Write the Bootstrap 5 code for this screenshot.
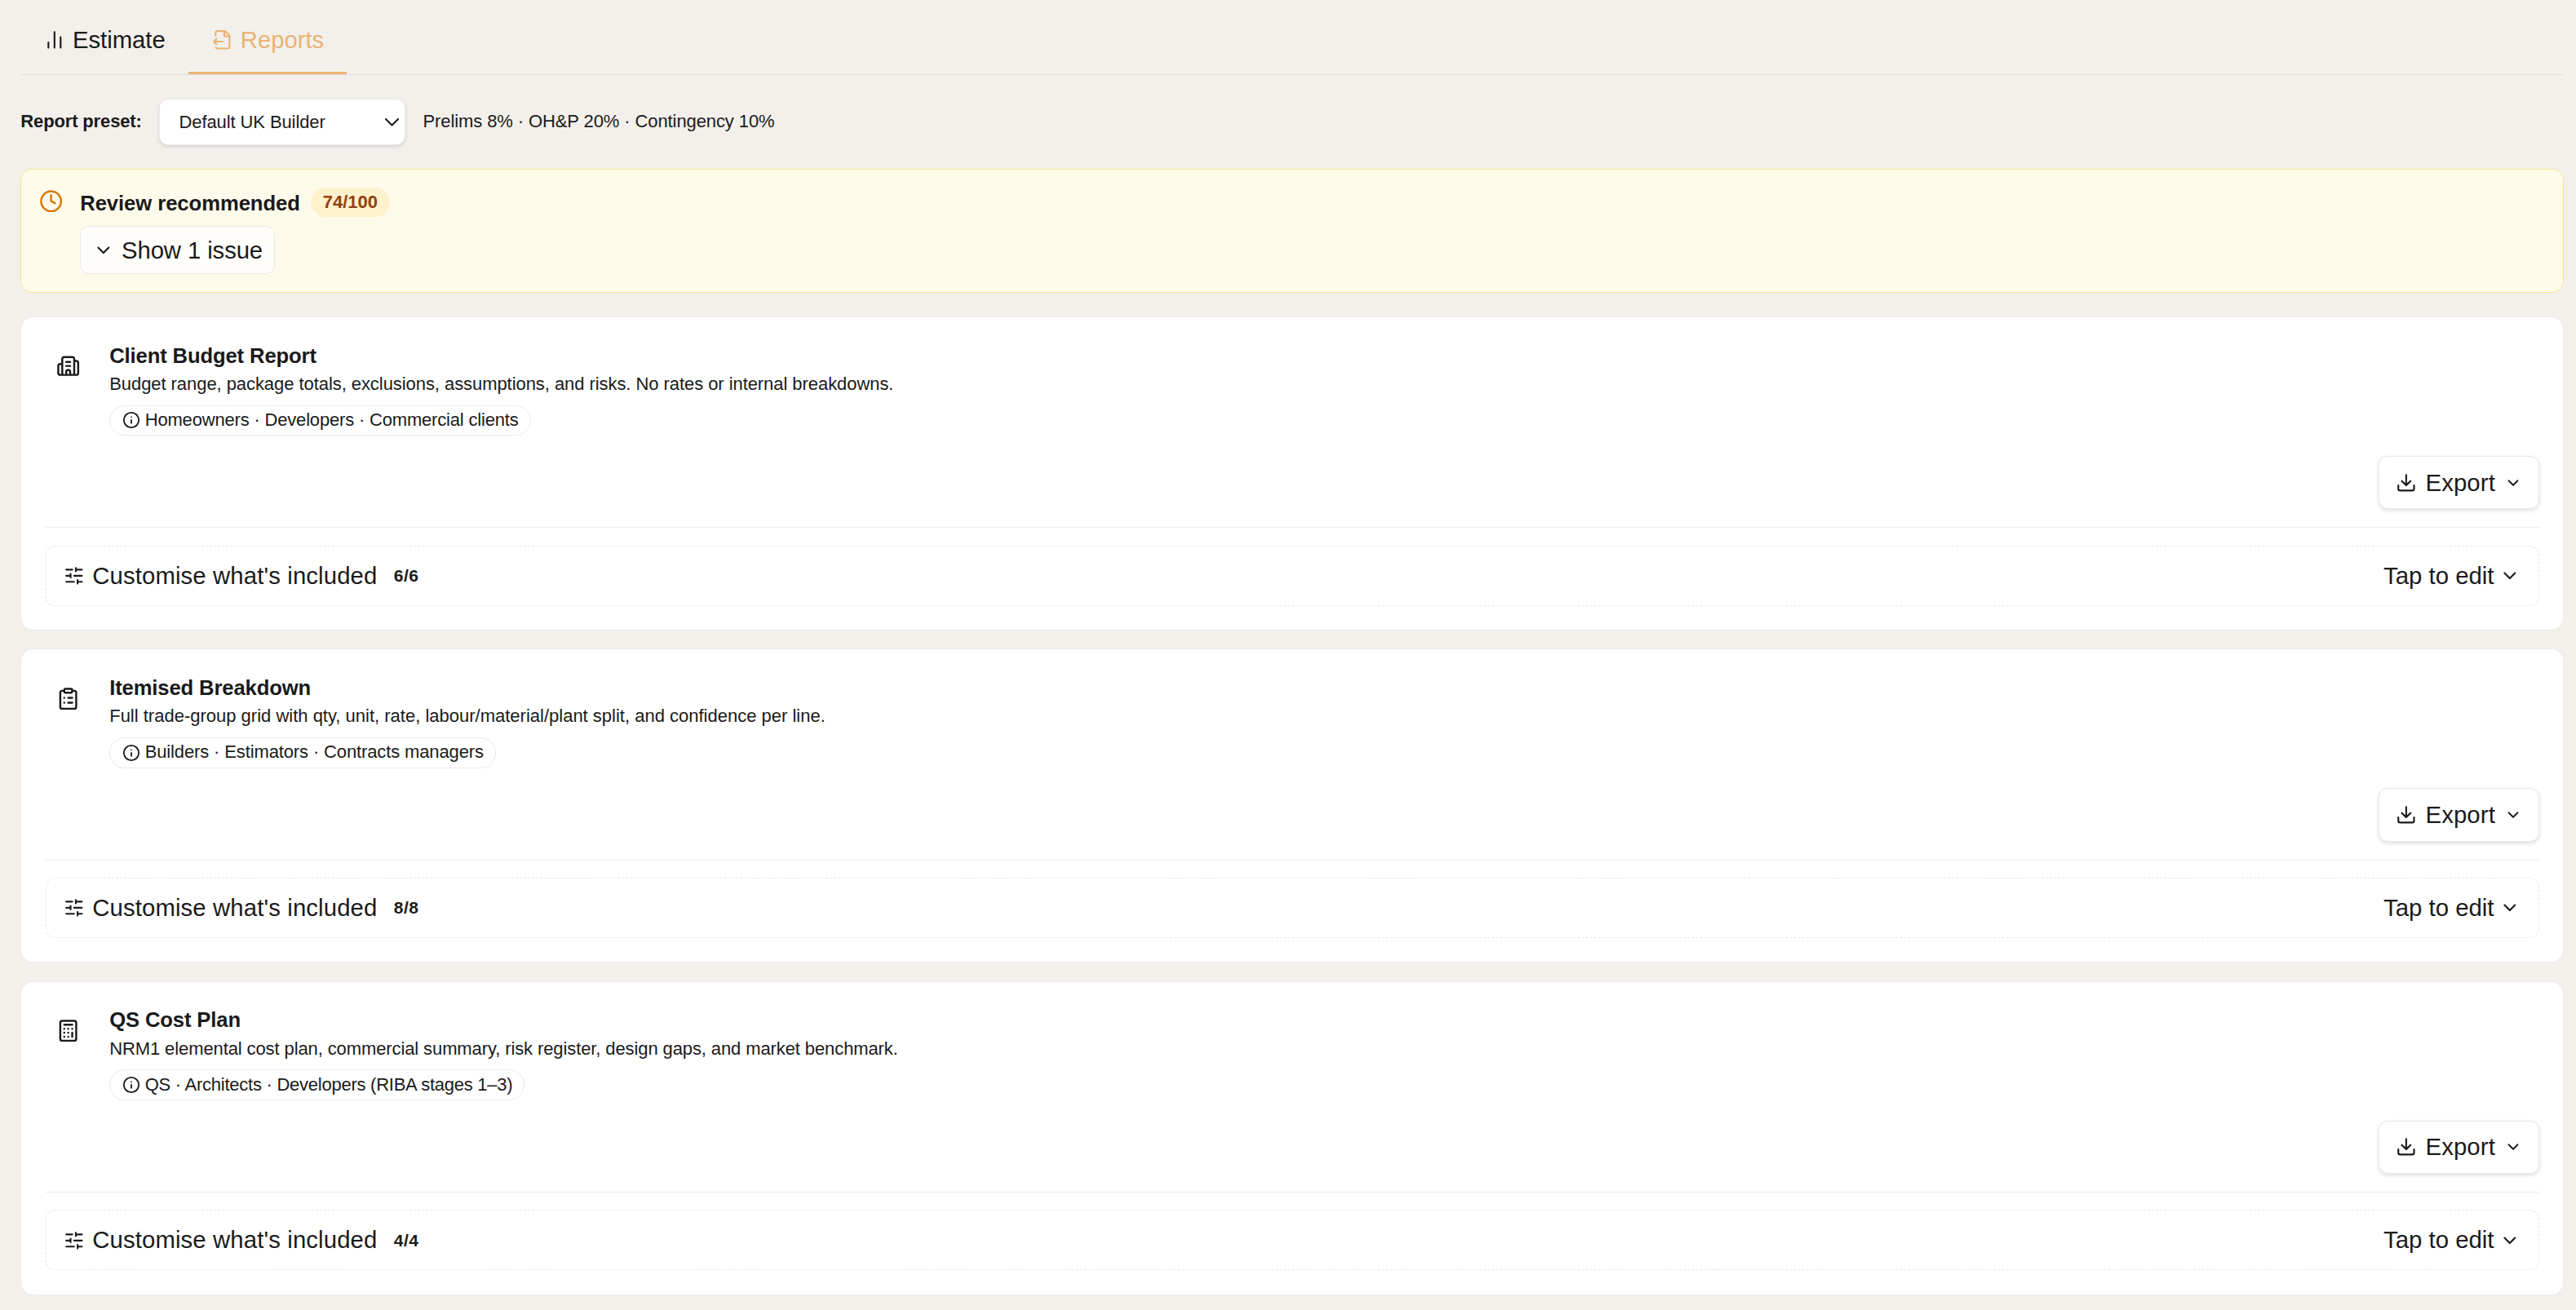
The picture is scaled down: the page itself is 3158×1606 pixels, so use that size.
<!DOCTYPE html>
<html lang="en">
<head>
<meta charset="utf-8">
<meta name="viewport" content="width=device-width, initial-scale=1">
<title>Reports</title>
<link href="https://cdn.jsdelivr.net/npm/bootstrap@5.3.0/dist/css/bootstrap.min.css" rel="stylesheet">
<script src="https://cdn.jsdelivr.net/npm/bootstrap@5.3.0/dist/js/bootstrap.bundle.min.js"></script>
<style>
  body { background:#f3f0eb; color:#1a1a1a; font-family:"Liberation Sans",Arial,sans-serif; font-size:22px; line-height:1.4; overflow:hidden; }
  .page { padding:10px 15.4px 0 25.3px; }
  svg { fill:none; stroke:currentColor; stroke-width:2; stroke-linecap:round; stroke-linejoin:round; flex:none; display:block; }
  .i12 { width:22px; height:22px; } .i14 { width:25.65px; height:25.65px; } .i16 { width:29.3px; height:29.3px; }
  .fs-body { font-size:29.3px; line-height:40px; letter-spacing:-.04px; white-space:nowrap; }
  .tabs { height:82px; border-bottom:1px solid #dfddd9; }
  .tab-link { height:81px; padding:0 28.4px 0 28.9px; gap:9.2px; color:inherit; border:0; border-bottom:3px solid transparent; background:none; }
  .tab-link.active { color:#e9b374; border-color:#e9b374; }
  .preset { height:56.4px; margin-top:29.3px; }
  .preset-label { letter-spacing:-.14px; }
  .preset-select { width:301.5px; height:56.4px; margin:0 22px 0 21.3px; padding:1.5px 6.5px 0 23.5px; background:#fff; border:1px solid #ebebeb; border-radius:11px; box-shadow:0 2px 4px rgba(0,0,0,.12); letter-spacing:-.1px; }
  .preset-note { letter-spacing:-.1px; }
  .review { margin-top:29.3px; height:152px; padding:22px; gap:20.6px; background:#fffbeb; border:1px solid #f9e58c; border-radius:14px; }
  .review .clock { color:#d97706; margin-top:2.4px; }
  .review-title { font-size:25.65px; line-height:36px; font-weight:700; margin:0 13.3px 0 0; padding-top:1.2px; letter-spacing:-.06px; }
  .score { background:#fdf2cc; color:#92400e; height:36px; line-height:35px; padding:0 14.7px; border-radius:18px; font-weight:700; letter-spacing:-.05px; }
  .show-btn { margin-top:10.2px; height:58.5px; padding:0 14px 0 14.6px; gap:9.6px; background:rgba(255,255,255,.8); border:1px solid #ebeae6; border-radius:11px; color:inherit; }
  .show-btn .fs-body { letter-spacing:-.1px; }
  .report { margin-top:29.1px; height:384.9px; padding:29.6px 29px 29.3px 29.3px; background:#fff; border:1px solid #ebebea; border-radius:15px; }
  .report + .report { margin-top:22.5px; }
  .tile { width:56.6px; height:60.6px; margin-right:22px; }
  .report-title { font-size:25.65px; line-height:34.4px; font-weight:700; margin:0; letter-spacing:-.14px; }
  .desc { line-height:35.4px; }
  .audience { margin-top:8.2px; height:37.5px; padding:0 14px 0 14.5px; gap:6px; border:1px solid #ebebeb; border-radius:19px; letter-spacing:-.18px; }
  .client .desc { letter-spacing:-.062px; }
  .itemised .audience { letter-spacing:-.13px; }
  .costplan .desc { letter-spacing:-.105px; }
  .costplan .audience { letter-spacing:-.25px; }
  .export { margin-top:24.6px; height:66.4px; padding:0 20px; gap:10.6px; background:#fff; border:1px solid #e9e9e9; border-radius:11px; box-shadow:0 2px 5px rgba(0,0,0,.13); color:inherit; }
  .export .fs-body { letter-spacing:.15px; }
  .options { margin-top:22px; padding-top:21.4px; border-top:1px solid #ebebeb; }
  .options-btn { height:74px; padding:0 21.5px 0 21px; border:1px dashed #e6e6e6; border-radius:11px; background:none; color:inherit; }
  .options-label { margin-left:10px; letter-spacing:.13px; }
  .options-hint { margin-right:7px; letter-spacing:.02px; }
  .count { font-size:21px; font-weight:700; letter-spacing:.4px; margin-left:20.4px; }
</style>
</head>
<body>
<svg width="0" height="0" class="position-absolute" aria-hidden="true">
  <symbol id="chart" viewBox="0 0 24 24"><path d="M5 21v-6M12 21V3M19 21V9"/></symbol>
  <symbol id="file" viewBox="0 0 24 24"><path d="M4.226 20.925A2 2 0 0 0 6 22h12a2 2 0 0 0 2-2V8a2.4 2.4 0 0 0-.706-1.706l-3.588-3.588A2.4 2.4 0 0 0 14 2H6a2 2 0 0 0-2 2v3.127M14 2v5a1 1 0 0 0 1 1h5M5 11l-3 3M5 17l-3-3h10"/></symbol>
  <symbol id="clock" viewBox="0 0 24 24"><circle cx="12" cy="12" r="10"/><path d="M12 6v6l4 2"/></symbol>
  <symbol id="down" viewBox="0 0 24 24"><path d="m6 9 6 6 6-6"/></symbol>
  <symbol id="info" viewBox="0 0 24 24"><circle cx="12" cy="12" r="10"/><path d="M12 16v-4M12 8h.01"/></symbol>
  <symbol id="download" viewBox="0 0 24 24"><path d="M12 15V3M21 15v4a2 2 0 0 1-2 2H5a2 2 0 0 1-2-2v-4M7 10l5 5 5-5"/></symbol>
  <symbol id="sliders" viewBox="0 0 24 24"><path d="M10 5H3M12 19H3M14 3v4M16 17v4M21 12h-9M21 19h-5M21 5h-7M8 10v4M8 12H3"/></symbol>
  <symbol id="building" viewBox="0 0 24 24"><path d="M10 12h4M10 8h4M14 21v-3a2 2 0 0 0-4 0v3M6 10H4a2 2 0 0 0-2 2v7a2 2 0 0 0 2 2h16a2 2 0 0 0 2-2V9a2 2 0 0 0-2-2h-2M6 21V5a2 2 0 0 1 2-2h8a2 2 0 0 1 2 2v16"/></symbol>
  <symbol id="clipboard" viewBox="0 0 24 24"><rect width="8" height="4" x="8" y="2" rx="1"/><path d="M16 4h2a2 2 0 0 1 2 2v14a2 2 0 0 1-2 2H6a2 2 0 0 1-2-2V6a2 2 0 0 1 2-2h2M12 11h4M12 16h4M8 11h.01M8 16h.01"/></symbol>
  <symbol id="calc" viewBox="0 0 24 24"><rect width="16" height="20" x="4" y="2" rx="2"/><path d="M8 6h8M16 14v4M16 10h.01M12 10h.01M8 10h.01M12 14h.01M8 14h.01M12 18h.01M8 18h.01"/></symbol>
</svg>
<main class="page">
  <nav class="tabs d-flex">
    <button class="tab-link d-flex align-items-center"><svg class="i14"><use href="#chart"/></svg><span class="fs-body">Estimate</span></button>
    <button class="tab-link active d-flex align-items-center"><svg class="i14"><use href="#file"/></svg><span class="fs-body">Reports</span></button>
  </nav>
  <div class="preset d-flex align-items-center">
    <span class="preset-label fw-bold">Report preset:</span>
    <div class="preset-select d-flex align-items-center justify-content-between"><span>Default UK Builder</span><svg width="17" height="10" viewBox="0 0 17 10"><path d="M1 1l7.5 7.5L16 1"/></svg></div>
    <span class="preset-note">Prelims 8% · OH&amp;P 20% · Contingency 10%</span>
  </div>
  <section class="review d-flex align-items-start">
    <svg class="i16 clock"><use href="#clock"/></svg>
    <div>
      <div class="d-flex"><span class="review-title">Review recommended</span><span class="score">74/100</span></div>
      <button class="show-btn d-flex align-items-center"><svg class="i14"><use href="#down"/></svg><span class="fs-body">Show 1 issue</span></button>
    </div>
  </section>

  <article class="report client d-flex flex-column">
    <div class="d-flex align-items-start">
      <div class="tile d-flex align-items-center justify-content-center"><svg class="i16"><use href="#building"/></svg></div>
      <div class="d-flex flex-column align-items-start">
        <h2 class="report-title">Client Budget Report</h2>
        <div class="desc">Budget range, package totals, exclusions, assumptions, and risks. No rates or internal breakdowns.</div>
        <div class="audience d-flex align-items-center"><svg class="i12"><use href="#info"/></svg><span>Homeowners · Developers · Commercial clients</span></div>
      </div>
    </div>
    <button class="export d-flex align-items-center align-self-end"><svg class="i14"><use href="#download"/></svg><span class="fs-body">Export</span><svg class="i12"><use href="#down"/></svg></button>
    <div class="options"><button class="options-btn w-100 d-flex align-items-center"><svg class="i14"><use href="#sliders"/></svg><span class="fs-body options-label">Customise what's included</span><span class="count">6/6</span><span class="fs-body options-hint ms-auto">Tap to edit</span><svg class="i14"><use href="#down"/></svg></button></div>
  </article>

  <article class="report itemised d-flex flex-column">
    <div class="d-flex align-items-start">
      <div class="tile d-flex align-items-center justify-content-center"><svg class="i16"><use href="#clipboard"/></svg></div>
      <div class="d-flex flex-column align-items-start">
        <h2 class="report-title">Itemised Breakdown</h2>
        <div class="desc">Full trade-group grid with qty, unit, rate, labour/material/plant split, and confidence per line.</div>
        <div class="audience d-flex align-items-center"><svg class="i12"><use href="#info"/></svg><span>Builders · Estimators · Contracts managers</span></div>
      </div>
    </div>
    <button class="export d-flex align-items-center align-self-end"><svg class="i14"><use href="#download"/></svg><span class="fs-body">Export</span><svg class="i12"><use href="#down"/></svg></button>
    <div class="options"><button class="options-btn w-100 d-flex align-items-center"><svg class="i14"><use href="#sliders"/></svg><span class="fs-body options-label">Customise what's included</span><span class="count">8/8</span><span class="fs-body options-hint ms-auto">Tap to edit</span><svg class="i14"><use href="#down"/></svg></button></div>
  </article>

  <article class="report costplan d-flex flex-column">
    <div class="d-flex align-items-start">
      <div class="tile d-flex align-items-center justify-content-center"><svg class="i16"><use href="#calc"/></svg></div>
      <div class="d-flex flex-column align-items-start">
        <h2 class="report-title">QS Cost Plan</h2>
        <div class="desc">NRM1 elemental cost plan, commercial summary, risk register, design gaps, and market benchmark.</div>
        <div class="audience d-flex align-items-center"><svg class="i12"><use href="#info"/></svg><span>QS · Architects · Developers (RIBA stages 1–3)</span></div>
      </div>
    </div>
    <button class="export d-flex align-items-center align-self-end"><svg class="i14"><use href="#download"/></svg><span class="fs-body">Export</span><svg class="i12"><use href="#down"/></svg></button>
    <div class="options"><button class="options-btn w-100 d-flex align-items-center"><svg class="i14"><use href="#sliders"/></svg><span class="fs-body options-label">Customise what's included</span><span class="count">4/4</span><span class="fs-body options-hint ms-auto">Tap to edit</span><svg class="i14"><use href="#down"/></svg></button></div>
  </article>
</main>
</body>
</html>
